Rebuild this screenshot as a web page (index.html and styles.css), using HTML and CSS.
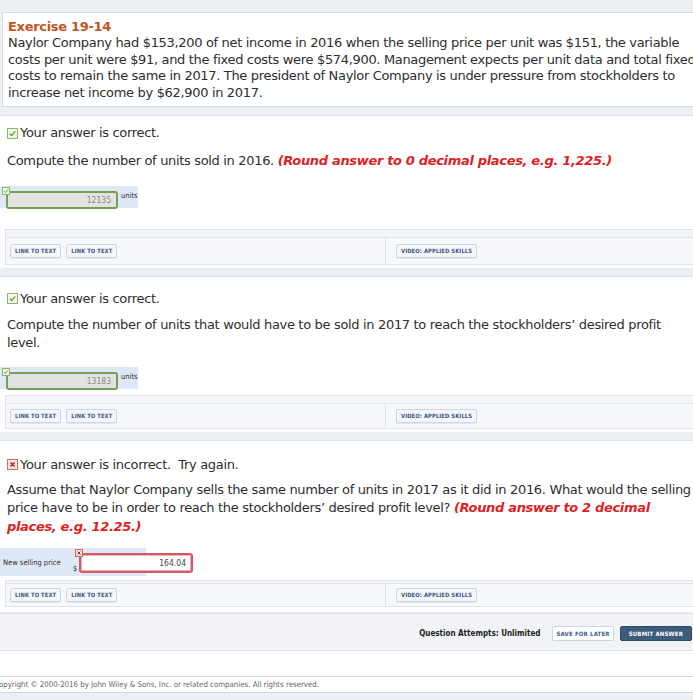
FILE: index.html
```html
<!DOCTYPE html>
<html>
<head>
<meta charset="utf-8">
<link rel="stylesheet" href="styles.css">
</head>
<body>
<div class="page">
  <div class="intro">
    <h1 class="title">Exercise 19-14</h1>
    <p class="intro-text">Naylor Company had $153,200 of net income in 2016 when the selling price per unit was $151, the variable costs per unit were $91, and the fixed costs were $574,900. Management expects per unit data and total fixed costs to remain the same in 2017. The president of Naylor Company is under pressure from stockholders to increase net income by $62,900 in 2017.</p>
  </div>

  <div class="question q1">
    <div class="status">
      <svg class="status-icon" width="11" height="11" viewBox="0 0 11 11"><rect x="0.5" y="0.5" width="10" height="10" fill="#f2f8ea" stroke="#8db56a"/><path d="M2.8 5.8 L4.6 7.6 L8.2 3.4" fill="none" stroke="#5f9a3a" stroke-width="1.3"/></svg>
      <span>Your answer is correct.</span>
    </div>
    <p class="prompt">Compute the number of units sold in 2016. <em class="hint">(Round answer to 0 decimal places, e.g. 1,225.)</em></p>
    <div class="answer-row">
      <div class="field">
        <span class="badge badge-ok"><svg width="6" height="6" viewBox="0 0 6 6"><path d="M1 3.2 L2.5 4.6 L5 1.4" fill="none" stroke="#5f9a3a" stroke-width="1"/></svg></span>
        <span class="input input-ok">12135</span>
      </div>
      <span class="unit">units</span>
    </div>
    <div class="links">
      <div class="links-head"></div>
      <div class="links-row">
        <div class="links-cell"><span class="btn">LINK TO TEXT</span><span class="btn">LINK TO TEXT</span></div>
        <div class="links-cell"><span class="btn">VIDEO: APPLIED SKILLS</span></div>
      </div>
    </div>
  </div>

  <div class="question q2">
    <div class="status">
      <svg class="status-icon" width="11" height="11" viewBox="0 0 11 11"><rect x="0.5" y="0.5" width="10" height="10" fill="#f2f8ea" stroke="#8db56a"/><path d="M2.8 5.8 L4.6 7.6 L8.2 3.4" fill="none" stroke="#5f9a3a" stroke-width="1.3"/></svg>
      <span>Your answer is correct.</span>
    </div>
    <p class="prompt">Compute the number of units that would have to be sold in 2017 to reach the stockholders’ desired profit level.</p>
    <div class="answer-row">
      <div class="field">
        <span class="badge badge-ok"><svg width="6" height="6" viewBox="0 0 6 6"><path d="M1 3.2 L2.5 4.6 L5 1.4" fill="none" stroke="#5f9a3a" stroke-width="1"/></svg></span>
        <span class="input input-ok">13183</span>
      </div>
      <span class="unit">units</span>
    </div>
    <div class="links">
      <div class="links-head"></div>
      <div class="links-row">
        <div class="links-cell"><span class="btn">LINK TO TEXT</span><span class="btn">LINK TO TEXT</span></div>
        <div class="links-cell"><span class="btn">VIDEO: APPLIED SKILLS</span></div>
      </div>
    </div>
  </div>

  <div class="question q3">
    <div class="status">
      <svg class="status-icon" width="11" height="11" viewBox="0 0 11 11"><rect x="0.5" y="0.5" width="10" height="10" fill="#fbe4e4" stroke="#d46a6a"/><path d="M3.5 3.5 L7.5 7.5 M7.5 3.5 L3.5 7.5" fill="none" stroke="#c41f1f" stroke-width="1.5"/></svg>
      <span>Your answer is incorrect.&nbsp; Try again.</span>
    </div>
    <p class="prompt">Assume that Naylor Company sells the same number of units in 2017 as it did in 2016. What would the selling price have to be in order to reach the stockholders’ desired profit level? <em class="hint">(Round answer to 2 decimal places, e.g. 12.25.)</em></p>
    <div class="answer-row price-row">
      <span class="price-label">New selling price</span>
      <span class="currency">$</span>
      <div class="field">
        <span class="badge badge-bad"><svg width="6" height="6" viewBox="0 0 6 6"><path d="M1.5 1.5 L4.5 4.5 M4.5 1.5 L1.5 4.5" fill="none" stroke="#c41f1f" stroke-width="1"/></svg></span>
        <span class="input input-bad">164.04</span>
      </div>
    </div>
    <div class="links links-slim">
      <div class="links-head"></div>
      <div class="links-row">
        <div class="links-cell"><span class="btn">LINK TO TEXT</span><span class="btn">LINK TO TEXT</span></div>
        <div class="links-cell"><span class="btn">VIDEO: APPLIED SKILLS</span></div>
      </div>
    </div>
  </div>

  <div class="actions">
    <span class="attempts">Question Attempts: Unlimited</span>
    <span class="action-btn save">SAVE FOR LATER</span>
    <span class="action-btn submit">SUBMIT ANSWER</span>
  </div>
  <div class="spacer"></div>
  <div class="footer">Copyright © 2000-2016 by John Wiley &amp; Sons, Inc. or related companies. All rights reserved.</div>
</div>
</body>
</html>
```

FILE: styles.css
```css
html, body {
  margin: 0;
  padding: 0;
}
body {
  background: #eceff3;
  overflow: hidden;
  width: 693px;
  height: 700px;
  font-family: "DejaVu Sans", Verdana, sans-serif;
  color: #2e2e2e;
}
.page {
  width: 712px;
  padding-top: 12px;
}
.intro {
  margin-left: 2px;
  background: #fff;
  border: 1px solid #d6dae1;
  padding: 6px 6px 5px 5px;
}
.title {
  margin: 0;
  font-size: 13px;
  line-height: 16px;
  font-weight: bold;
  color: #c4531f;
  letter-spacing: -0.3px;
}
.intro-text {
  margin: 0;
  font-size: 13px;
  line-height: 16.5px;
  letter-spacing: -0.33px;
}
.question {
  background: #fff;
  margin-top: 8px;
  border-top: 1px solid #dfe2e8;
  padding: 9px 13px 3px 7px;
}
.q2 { padding-top: 14px; }
.q3 { padding-top: 16px; padding-bottom: 5px; }
.status {
  display: flex;
  align-items: center;
  gap: 2px;
  font-size: 13px;
  line-height: 16px;
  letter-spacing: -0.33px;
}
.status-icon {
  flex: none;
}
.prompt {
  margin: 11px 0 0;
  font-size: 13px;
  line-height: 18.5px;
  letter-spacing: -0.33px;
}
.q2 .prompt { margin-top: 9px; max-width: 668px; }
.q3 .prompt { margin-top: 8px; }
.hint {
  color: #e01e25;
  font-weight: bold;
}
.answer-row {
  display: flex;
  align-items: flex-start;
  box-sizing: border-box;
  width: 138px;
  height: 22px;
  margin: 15px 0 0 -7px;
  padding: 5px 0 0 6px;
  background: #dfe8f6;
}
.q2 .answer-row { margin-top: 14px; }
.field {
  position: relative;
}
.input {
  display: block;
  box-sizing: border-box;
  width: 112px;
  height: 18px;
  border-radius: 3px;
  font-family: "DejaVu Sans Condensed", "DejaVu Sans", sans-serif;
  font-stretch: condensed;
  font-size: 8.5px;
  line-height: 14px;
  text-align: right;
  padding-right: 5px;
  color: #8a8a8a;
}
.input-ok {
  background: #e2e2e2;
  border: 2px solid #74a054;
}
.input-bad {
  width: 114px;
  height: 20px;
  line-height: 16px;
  background: #fff;
  color: #444;
  border: 2px solid #d25a66;
  box-shadow: inset 0 0 0 1px #eeb0b6;
}
.badge {
  position: absolute;
  left: -4px;
  top: -4px;
  width: 8px;
  height: 8px;
  box-sizing: border-box;
  display: flex;
  align-items: center;
  justify-content: center;
}
.badge-ok {
  background: #f2f8ea;
  border: 1px solid #8db56a;
}
.badge-bad {
  background: #fbe4e4;
  border: 1px solid #d46a6a;
}
.badge svg { display: block; }
.unit, .price-label, .currency {
  font-family: "DejaVu Sans Condensed", "DejaVu Sans", sans-serif;
  font-stretch: condensed;
  font-size: 7.5px;
}
.unit {
  margin-left: 3px;
  line-height: 10px;
}
.price-row {
  width: 146px;
  height: 28px;
  padding: 5px 0 0 3px;
  margin-top: 12px;
}
.price-label {
  width: 70px;
  flex: none;
  line-height: 20px;
  white-space: nowrap;
}
.currency {
  width: 6px;
  flex: none;
  margin-top: 11px;
  line-height: 10px;
}
.links {
  margin: 21px 0 0 -2px;
  border: 1px solid #dfe3ea;
  background: #f7f8fb;
}
.q2 .links { margin-top: 6px; }
.links-head {
  height: 7px;
  border-bottom: 1px solid #e1e5eb;
  background: #f3f5f8;
}
.links-row {
  display: grid;
  grid-template-columns: 379px 1fr;
}
.links-cell {
  display: flex;
  align-items: center;
  gap: 5px;
  padding: 0 4px;
  height: 26px;
}
.q2 .links-cell { height: 24px; }
.links-cell + .links-cell {
  border-left: 1px solid #dde1e8;
  padding-left: 10px;
}
.btn {
  font-family: "DejaVu Sans Condensed", "DejaVu Sans", sans-serif;
  font-stretch: condensed;
  font-size: 5.8px;
  font-weight: bold;
  color: #3a5683;
  background: #f4f6fa;
  border: 1px solid #cfd6e1;
  border-radius: 2px;
  padding: 3px 4px;
  line-height: 6px;
  letter-spacing: 0.1px;
  box-shadow: 0 1px 0 #e3e7ee;
}
.links-slim {
  margin-top: 4px;
}
.links-slim .links-head { height: 2px; }
.links-slim .links-cell { height: 22px; }
.actions {
  box-sizing: border-box;
  height: 38px;
  margin-top: 1px;
  background: #f1f3f7;
  border-top: 1px solid #dfe2e8;
  border-bottom: 1px solid #dfe2e8;
  display: flex;
  align-items: center;
  justify-content: flex-end;
  padding: 3px 20px 0 0;
  gap: 6px;
  font-family: "DejaVu Sans Condensed", "DejaVu Sans", sans-serif;
  font-stretch: condensed;
}
.attempts {
  font-size: 8px;
  font-weight: bold;
  color: #222;
  margin-right: 6px;
}
.action-btn {
  font-size: 6px;
  font-weight: bold;
  line-height: 7px;
  border-radius: 2px;
  letter-spacing: 0.2px;
}
.save {
  color: #3d6190;
  background: #fff;
  border: 1px solid #cdd5e0;
  padding: 3px 3px;
}
.submit {
  color: #fff;
  background: #3e5b7b;
  border: 1px solid #2e4866;
  padding: 3px 8px;
}
.spacer {
  height: 25px;
  background: #fff;
  border-bottom: 1px solid #d4d7dd;
}
.footer {
  background: #fff;
  font-family: "DejaVu Sans Condensed", "DejaVu Sans", sans-serif;
  font-stretch: condensed;
  font-size: 7.8px;
  color: #666;
  line-height: 15px;
  margin-left: -6px;
  border-bottom: 1px solid #d4d7dd;
}
```
